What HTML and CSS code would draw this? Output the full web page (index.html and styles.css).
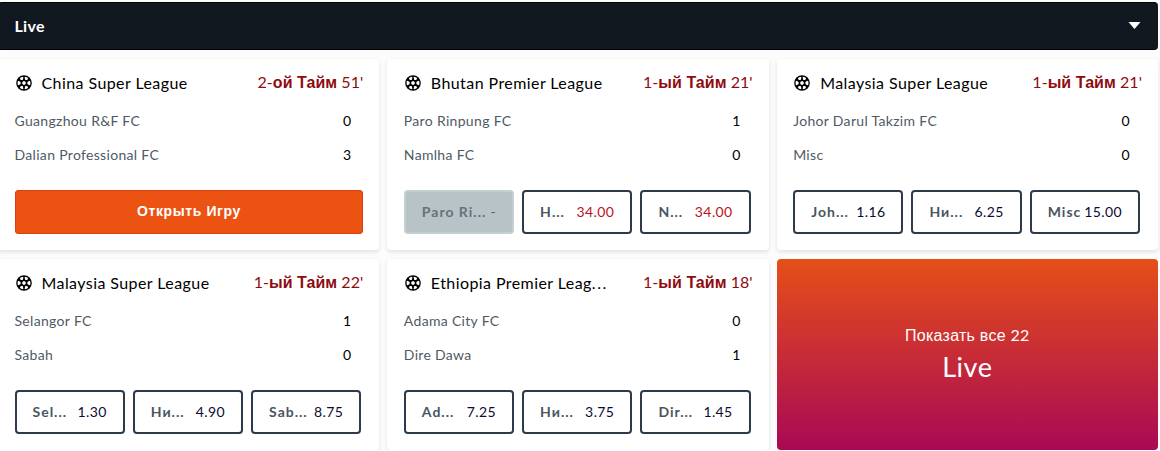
FILE: index.html
```html
<!DOCTYPE html>
<html lang="ru">
<head>
    <meta charset="UTF-8">
    <title>Live</title>
    <link rel="stylesheet" href="styles.css">
</head>
<body>
    <svg class="sprite" aria-hidden="true">
        <symbol id="ball" viewBox="0 0 16 16">
            <circle cx="8" cy="8" r="7.8" fill="#000"/>
            <g fill="#fff">
                <path d="M7 6.2h2L10 8 9 9.8H7L6 8Z"/>
                <path d="M4.6 2.6 6.8 1.7 7.4 2.6 6.7 4.9 4.9 5 3.9 3.8Z"/>
                <path d="M11.4 2.6 9.2 1.7 8.6 2.6 9.3 4.9 11.1 5 12.1 3.8Z"/>
                <path d="M1.6 6.6 2.7 5.8 4.6 7.1V8.9L2.7 10.2 1.6 9.4Z"/>
                <path d="M14.4 6.6 13.3 5.8 11.4 7.1V8.9L13.3 10.2 14.4 9.4Z"/>
                <path d="M4.6 13.4 6.8 14.3 7.4 13.4 6.7 11.1 4.9 11 3.9 12.2Z"/>
                <path d="M11.4 13.4 9.2 14.3 8.6 13.4 9.3 11.1 11.1 11 12.1 12.2Z"/>
            </g>
        </symbol>
    </svg>

    <div class="live">
        <header class="live-header">
            <span>Live</span>
            <svg class="arrow" viewBox="0 0 12 7"><path d="M0 0h12L6 7z" fill="#fff"/></svg>
        </header>

        <div class="games">
            <div class="card">
                <div class="card-title">
                    <svg class="ball"><use href="#ball"/></svg>
                    <span class="league">China Super League</span>
                    <span class="time">2-<b>ой Тайм</b> 51'</span>
                </div>
                <div class="team"><span>Guangzhou R&amp;F FC</span><span class="score">0</span></div>
                <div class="team"><span>Dalian Professional FC</span><span class="score">3</span></div>
                <button class="open-btn">Открыть Игру</button>
            </div>

            <div class="card">
                <div class="card-title">
                    <svg class="ball"><use href="#ball"/></svg>
                    <span class="league">Bhutan Premier League</span>
                    <span class="time">1-<b>ый Тайм</b> 21'</span>
                </div>
                <div class="team"><span>Paro Rinpung FC</span><span class="score">1</span></div>
                <div class="team"><span>Namlha FC</span><span class="score">0</span></div>
                <div class="odds">
                    <button class="odd disabled"><span>Paro Ri...</span><span class="price">-</span></button>
                    <button class="odd down"><span>Н...</span><span class="price">34.00</span></button>
                    <button class="odd down"><span>N...</span><span class="price">34.00</span></button>
                </div>
            </div>

            <div class="card">
                <div class="card-title">
                    <svg class="ball"><use href="#ball"/></svg>
                    <span class="league">Malaysia Super League</span>
                    <span class="time">1-<b>ый Тайм</b> 21'</span>
                </div>
                <div class="team"><span>Johor Darul Takzim FC</span><span class="score">0</span></div>
                <div class="team"><span>Misc</span><span class="score">0</span></div>
                <div class="odds">
                    <button class="odd"><span>Joh...</span><span class="price">1.16</span></button>
                    <button class="odd"><span>Ни...</span><span class="price">6.25</span></button>
                    <button class="odd"><span>Misc</span><span class="price">15.00</span></button>
                </div>
            </div>

            <div class="card">
                <div class="card-title">
                    <svg class="ball"><use href="#ball"/></svg>
                    <span class="league">Malaysia Super League</span>
                    <span class="time">1-<b>ый Тайм</b> 22'</span>
                </div>
                <div class="team"><span>Selangor FC</span><span class="score">1</span></div>
                <div class="team"><span>Sabah</span><span class="score">0</span></div>
                <div class="odds">
                    <button class="odd"><span>Sel...</span><span class="price">1.30</span></button>
                    <button class="odd"><span>Ни...</span><span class="price">4.90</span></button>
                    <button class="odd"><span>Sab...</span><span class="price">8.75</span></button>
                </div>
            </div>

            <div class="card">
                <div class="card-title">
                    <svg class="ball"><use href="#ball"/></svg>
                    <span class="league">Ethiopia Premier Leag<span class="dots">...</span></span>
                    <span class="time">1-<b>ый Тайм</b> 18'</span>
                </div>
                <div class="team"><span>Adama City FC</span><span class="score">0</span></div>
                <div class="team"><span>Dire Dawa</span><span class="score">1</span></div>
                <div class="odds">
                    <button class="odd"><span>Ad...</span><span class="price">7.25</span></button>
                    <button class="odd"><span>Ни...</span><span class="price">3.75</span></button>
                    <button class="odd"><span>Dir...</span><span class="price">1.45</span></button>
                </div>
            </div>

            <a class="show-all">
                <span class="show-all-text">Показать все <i>22</i></span>
                <span class="show-all-title">Live</span>
            </a>
        </div>
    </div>
</body>
</html>
```

FILE: styles.css
```css
* {
    box-sizing: border-box;
}

body {
    margin: 0;
    overflow: hidden;
    background-color: #fcfcfd;
    font-family: Lato, "Liberation Sans", sans-serif;
    color: #000;
}

.sprite {
    display: none;
}

.live {
    width: 1160px;
    margin: 0 0 0 -2px;
    padding-top: 2px;
}

.live-header {
    display: flex;
    justify-content: space-between;
    align-items: center;
    height: 48px;
    padding: 0 17px 1px 16.5px;
    border-radius: 4px;
    border-top: 1px solid #000409;
    border-bottom: 1px solid #000409;
    background-color: #11181f;
    color: #fff;
    font-size: 16px;
    font-weight: bold;
    letter-spacing: 0.3px;
}

.arrow {
    width: 13px;
    height: 7px;
}

.games {
    display: grid;
    grid-template-columns: repeat(3, 1fr);
    grid-auto-rows: 191px;
    gap: 9px 8px;
    margin-top: 9px;
}

.card {
    padding: 7px 16px 0 16.5px;
    background-color: #fff;
    border-radius: 4px;
    box-shadow: 0 2px 4px rgba(20, 30, 60, 0.12);
}

.card-title {
    display: flex;
    align-items: center;
    height: 33px;
    margin-bottom: 5px;
}

.ball {
    width: 16px;
    height: 16px;
    margin: 1px 10px 0 1px;
}

.league {
    font-size: 16px;
    letter-spacing: 0.42px;
}

.dots {
    letter-spacing: 1.6px;
}

.time {
    margin-left: auto;
    padding-bottom: 1px;
    color: #8e0b10;
    font-size: 16px;
    letter-spacing: 0.05px;
}

.time b {
    font-family: "Liberation Sans", sans-serif;
}

.team {
    display: flex;
    justify-content: space-between;
    align-items: center;
    height: 33.5px;
    padding-right: 12px;
    color: #4f5a65;
    font-size: 14px;
    letter-spacing: 0.32px;
}

.score {
    color: #000;
}

.open-btn {
    width: 100%;
    height: 44px;
    margin-top: 19px;
    padding-bottom: 3px;
    border: 1px solid #d8420f;
    border-radius: 3px;
    background-color: #ec5313;
    color: #fff;
    font-family: "Liberation Sans", sans-serif;
    font-size: 14px;
    font-weight: bold;
    letter-spacing: 0.6px;
}

.odds {
    display: grid;
    grid-template-columns: repeat(3, 1fr);
    gap: 8px;
    margin: 19px 2px 0 0;
}

.odd {
    display: flex;
    justify-content: space-between;
    align-items: center;
    height: 44px;
    padding: 0 16px 2px;
    border: 2px solid #2c3a4b;
    border-radius: 4px;
    background-color: #fff;
    color: #4a5560;
    font-family: Lato, "Liberation Sans", sans-serif;
    font-size: 14px;
    font-weight: bold;
    letter-spacing: 1px;
}

.price {
    color: #0b0b33;
    font-weight: normal;
    letter-spacing: 0.4px;
}

.down .price {
    color: #b8151b;
}

.disabled {
    border-color: #c4cfd2;
    background-color: #b7c3c7;
    color: #66727a;
}

.disabled .price {
    color: #55616a;
}

.show-all {
    display: flex;
    flex-direction: column;
    align-items: center;
    justify-content: center;
    padding-bottom: 2px;
    border-radius: 4px;
    background: linear-gradient(#e54f18, #a90955);
    color: #fff;
}

.show-all-text {
    font-family: "Liberation Sans", sans-serif;
    font-size: 16px;
    line-height: 26px;
    letter-spacing: 0.25px;
}

.show-all-text i {
    font-family: Lato, sans-serif;
    font-style: normal;
}

.show-all-title {
    font-size: 27px;
    line-height: 36px;
    letter-spacing: 0.5px;
}
```
